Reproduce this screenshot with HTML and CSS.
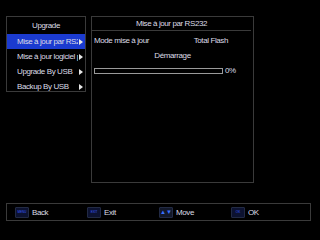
FILE: index.html
```html
<!DOCTYPE html>
<html lang="fr">
<head>
  <meta charset="utf-8">
  <title>Upgrade</title>
  <link rel="stylesheet" href="styles.css">
</head>
<body>
  <div id="screen">
    <div class="main">
      <div class="menu">
        <div class="menu-title">Upgrade</div>
        <div class="item active"><span>Mise à jour par RS232</span><i class="arrow"></i></div>
        <div class="item"><span>Mise à jour logiciel par USB</span><i class="arrow"></i></div>
        <div class="item"><span>Upgrade By USB</span><i class="arrow"></i></div>
        <div class="item"><span>Backup By USB</span><i class="arrow"></i></div>
      </div>

      <div class="panel">
        <div class="panel-title">Mise à jour par RS232</div>
        <div class="row">
          <span>Mode mise à jour</span>
          <span class="value">Total Flash</span>
        </div>
        <div class="start">Démarrage</div>
        <div class="progress">
          <div class="bar"></div>
          <span>0%</span>
        </div>
      </div>
    </div>

    <div class="footer">
      <div class="key"><span class="btn">MENU</span>Back</div>
      <div class="key"><span class="btn">EXIT</span>Exit</div>
      <div class="key"><span class="btn arrows">▲▼</span>Move</div>
      <div class="key"><span class="btn">OK</span>OK</div>
    </div>
  </div>
</body>
</html>
```

FILE: styles.css
```css
html, body {
  margin: 0;
  background: #000;
}
body {
  font-family: "Liberation Sans", Arial, sans-serif;
  font-size: 8px;
  letter-spacing: -0.4px;
  color: #dcdce6;
}
#screen {
  width: 320px;
  height: 240px;
  padding: 16px 0 0 6px;
  box-sizing: border-box;
}
.main {
  display: flex;
  align-items: flex-start;
  gap: 5px;
  height: 167px;
}

/* left menu */
.menu {
  width: 78px;
  height: 74px;
  border: 1px solid #3a3a3a;
}
.menu-title {
  height: 17px;
  line-height: 17px;
  text-align: center;
}
.item {
  display: flex;
  align-items: center;
  height: 15px;
  padding-left: 10px;
  padding-right: 2px;
}
.item span {
  flex: 1;
  white-space: nowrap;
  overflow: hidden;
}
.item.active {
  background: #1b3bd0;
}
.arrow {
  width: 0;
  height: 0;
  margin-left: 1px;
  border-top: 3px solid transparent;
  border-bottom: 3px solid transparent;
  border-left: 4px solid #e8e8e8;
}

/* right panel */
.panel {
  width: 161px;
  height: 165px;
  border: 1px solid #3a3a3a;
}
.panel-title {
  height: 13px;
  line-height: 13px;
  text-align: center;
  border-bottom: 1px solid #3a3a3a;
  margin: 0 2px 0 0;
}
.row {
  display: flex;
  justify-content: space-between;
  padding: 5px 25px 0 2px;
  line-height: 10px;
}
.start {
  text-align: center;
  margin-top: 5px;
  line-height: 10px;
}
.progress {
  display: flex;
  align-items: center;
  gap: 2px;
  margin-top: 5px;
  padding-left: 2px;
}
.bar {
  width: 127px;
  height: 4px;
  border: 1px solid #9a9a9a;
}

/* footer */
.footer {
  display: flex;
  align-items: center;
  width: 303px;
  height: 16px;
  margin-top: 20px;
  border: 1px solid #3a3a3a;
}
.key {
  display: flex;
  align-items: center;
  gap: 3px;
  width: 72px;
  padding-left: 8px;
  box-sizing: border-box;
}
.btn {
  width: 12px;
  height: 9px;
  line-height: 9px;
  font-size: 3px;
  letter-spacing: 0;
  text-align: center;
  color: #3a5cff;
  background: #0c1230;
  border: 1px solid #222a44;
  border-radius: 1px;
  overflow: hidden;
}
.btn.arrows {
  font-size: 6px;
  background: #12182a;
  color: #3a70ff;
}
```
